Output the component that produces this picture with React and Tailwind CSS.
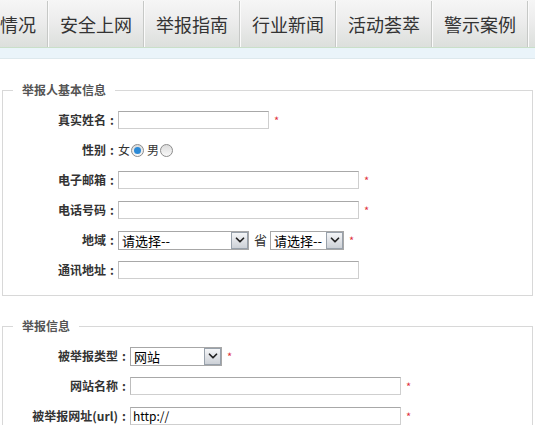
import { ChevronDown } from "lucide-react";

const tabs = ["安全上网", "举报指南", "行业新闻", "活动荟萃", "警示案例"];

const Sep = () => (
  <div className="flex h-full">
    <div className="w-px bg-[#c6c8c6]"></div>
    <div className="w-px bg-[#fbfbfb]"></div>
  </div>
);

const Star = () => (
  <span className="ml-[5px] text-[11px] leading-none text-[#e0303c]">*</span>
);

const Input = ({ w, value }) => (
  <div
    className={`h-[18px] ${w} border border-[#cfcfcf] border-t-[#a8a8a8] border-l-[#bdbdbd] bg-white pl-[2px] text-xs leading-[16px] text-black`}
  >
    {value}
  </div>
);

const Select = ({ w, value }) => (
  <div
    className={`flex h-[19px] ${w} items-center border border-[#a7a7a7] bg-white`}
  >
    <span className="flex-1 overflow-hidden whitespace-nowrap pl-[3px] text-[13px] leading-[17px] text-black">
      {value}
    </span>
    <div className="flex h-[17px] w-[17px] items-center justify-center border border-[#98a1ab] bg-gradient-to-b from-[#f4f5f7] to-[#cdd1d7]">
      <ChevronDown size={14} strokeWidth={3} className="text-[#222]" />
    </div>
  </div>
);

const Radio = ({ checked }) => (
  <div className="flex h-[13px] w-[13px] items-center justify-center rounded-full border border-[#8c8c8c] bg-gradient-to-b from-[#dcdcdc] to-[#f8f8f8]">
    {checked && <div className="h-[7px] w-[7px] rounded-full bg-[#2c8ad6]"></div>}
  </div>
);

const Row = ({ label, lw, children }) => (
  <div className="flex h-[30px] items-center">
    <div className={`${lw} text-right text-xs font-bold text-[#333]`}>
      {label}
      <span className="inline-block w-[12px] text-center">:</span>
    </div>
    {children}
  </div>
);

const Box = ({ title, mt, children }) => (
  <fieldset className={`mx-[2px] ${mt} border border-[#d8d8d8]`}>
    <legend className="ml-[10px] px-[9px] text-xs font-bold leading-[16px] text-[#555]">
      {title}
    </legend>
    <div className="pb-[10px] pt-[7px]">{children}</div>
  </fieldset>
);

export default function App() {
  return (
    <div
      className="h-[425px] w-[535px] overflow-hidden bg-white"
      style={{ fontFamily: '"Noto Sans CJK SC", "Noto Sans", sans-serif' }}
    >
      {/* top nav */}
      <div className="flex h-[47px] items-center bg-gradient-to-b from-[#f6f6f6] via-[#ebebeb] to-[#dcdfdc] pt-px text-[18px] text-[#333]">
        <div className="flex h-full items-center whitespace-nowrap pr-[11px]">情况</div>
        {tabs.map((t) => (
          <div key={t} className="flex h-full items-center">
            <Sep />
            <div className="whitespace-nowrap px-[11px]">{t}</div>
          </div>
        ))}
        <Sep />
      </div>
      <div className="h-px bg-[#c9dfc9]"></div>
      <div className="h-[11px] border-b border-[#dde8ed] bg-[#eaf4fa]"></div>

      <Box title="举报人基本信息" mt="mt-[23px]">
        <Row label="真实姓名" lw="w-[115px]">
          <Input w="w-[151px]" />
          <Star />
        </Row>
        <Row label="性别" lw="w-[115px]">
          <span className="text-xs text-[#333]">女</span>
          <div className="ml-px">
            <Radio checked />
          </div>
          <span className="ml-[3px] text-xs text-[#333]">男</span>
          <div className="ml-px">
            <Radio />
          </div>
        </Row>
        <Row label="电子邮箱" lw="w-[115px]">
          <Input w="w-[241px]" />
          <Star />
        </Row>
        <Row label="电话号码" lw="w-[115px]">
          <Input w="w-[241px]" />
          <Star />
        </Row>
        <Row label="地域" lw="w-[115px]">
          <Select w="w-[131px]" value="请选择--" />
          <span className="ml-[5px] mr-[3px] text-[13px] text-[#333]">省</span>
          <Select w="w-[74px]" value="请选择--" />
          <Star />
        </Row>
        <Row label="通讯地址" lw="w-[115px]">
          <Input w="w-[241px]" />
        </Row>
      </Box>

      <Box title="举报信息" mt="mt-[22px]">
        <Row label="被举报类型" lw="w-[127px]">
          <Select w="w-[92px]" value="网站" />
          <Star />
        </Row>
        <Row label="网站名称" lw="w-[127px]">
          <Input w="w-[271px]" />
          <Star />
        </Row>
        <Row label="被举报网址(url)" lw="w-[127px]">
          <Input w="w-[271px]" value="http://" />
          <Star />
        </Row>
      </Box>
    </div>
  );
}
